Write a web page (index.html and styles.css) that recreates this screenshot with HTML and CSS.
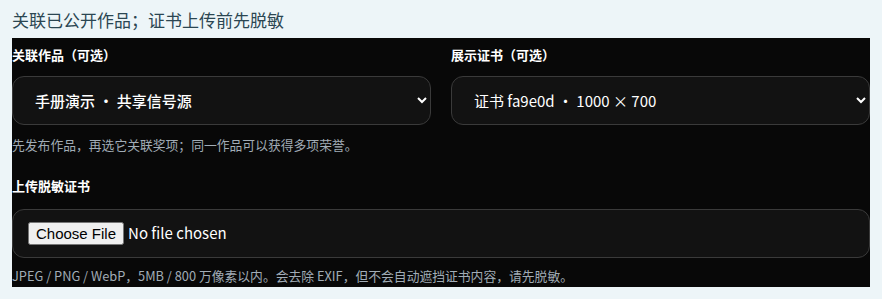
FILE: index.html
```html
<!DOCTYPE html>
<html lang="zh-CN">
<head>
    <meta charset="UTF-8">
    <meta name="viewport" content="width=device-width, initial-scale=1.0">
    <title>关联作品与证书</title>
    <link rel="stylesheet" href="styles.css">
</head>
<body>
    <h2 class="section-title">关联已公开作品；证书上传前先脱敏</h2>
    <form class="award-form">
        <div class="field-row">
            <div class="field">
                <label for="workSelect">关联作品（可选）</label>
                <select id="workSelect" class="field-control select-work">
                    <option>手册演示 · 共享信号源</option>
                </select>
            </div>
            <div class="field">
                <label for="certSelect">展示证书（可选）</label>
                <select id="certSelect" class="field-control">
                    <option>证书 fa9e0d · 1000 × 700</option>
                </select>
            </div>
        </div>
        <p class="hint">先发布作品，再选它关联奖项；同一作品可以获得多项荣誉。</p>

        <div class="field upload-field">
            <label for="certFile">上传脱敏证书</label>
            <div class="file-box">
                <input type="file" id="certFile" accept="image/jpeg,image/png,image/webp">
            </div>
        </div>
        <p class="hint hint-upload">JPEG / PNG / WebP，5MB / 800 万像素以内。会去除 EXIF，但不会自动遮挡证书内容，请先脱敏。</p>
    </form>
</body>
</html>
```

FILE: styles.css
```css
body {
    font-family: "Noto Sans CJK SC", "Noto Sans", sans-serif;
    margin: 0;
    padding: 7px 12px 0;
    background-color: #edf5f8;
}
.section-title {
    margin: 0 0 5px;
    font-size: 17px;
    line-height: 26px;
    font-weight: 400;
    color: #2b4652;
}
.award-form {
    background-color: #080808;
    padding: 8px 0 2px;
}
.field-row {
    display: grid;
    grid-template-columns: 1fr 1fr;
    gap: 20px;
}
.field label {
    display: block;
    font-size: 13px;
    line-height: 18px;
    font-weight: 700;
    color: #ffffff;
    margin-bottom: 12px;
}
.field-control {
    width: 100%;
    height: 49px;
    padding: 0 8px 0 18px;
    font-family: inherit;
    font-size: 15px;
    color: #ffffff;
    background-color: #121212;
    border: 1px solid #3a3a3a;
    border-radius: 12px;
    box-sizing: border-box;
}
.select-work {
    font-weight: 500;
}
.hint {
    margin: 11px 0 0;
    font-size: 12.8px;
    line-height: 18px;
    color: #a1acb6;
}
.upload-field {
    margin-top: 23px;
}
.upload-field label {
    margin-bottom: 14px;
}
.file-box {
    height: 49px;
    display: flex;
    align-items: center;
    padding: 0 15px;
    background-color: #121212;
    border: 1px solid #3a3a3a;
    border-radius: 12px;
    box-sizing: border-box;
}
.file-box input {
    font-family: inherit;
    font-size: 15px;
    color: #ffffff;
}
.hint-upload {
    margin-top: 9px;
}
```
